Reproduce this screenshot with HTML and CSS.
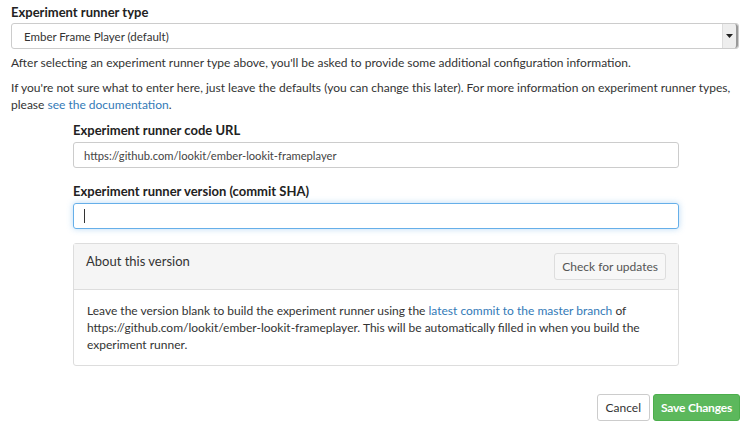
FILE: index.html
```
<!DOCTYPE html>
<html>
<head>
<meta charset="utf-8">
<link rel="stylesheet" href="styles.css">
</head>
<body>
<form class="form">
  <div class="group">
    <label class="label">Experiment runner type</label>
    <div class="select">
      <span class="select-value">Ember Frame Player (default)</span>
      <span class="select-arrow"><svg width="7" height="4" viewBox="0 0 7 4"><path d="M0 0H7L3.5 4Z" fill="#222"/></svg></span>
    </div>
  </div>
  <p class="help">After selecting an experiment runner type above, you'll be asked to provide some additional configuration information.</p>
  <p class="help help-2">If you're not sure what to enter here, just leave the defaults (you can change this later). For more information on experiment runner types, please <a href="#">see the documentation</a>.</p>

  <div class="indent">
    <div class="group">
      <label class="label">Experiment runner code URL</label>
      <div class="input">https://github.com/lookit/ember-lookit-frameplayer</div>
    </div>
    <div class="group">
      <label class="label">Experiment runner version (commit SHA)</label>
      <div class="input focus"><span class="caret"></span></div>
    </div>
    <div class="panel">
      <div class="panel-head">
        <span class="panel-title">About this version</span>
        <button type="button" class="btn btn-light">Check for updates</button>
      </div>
      <div class="panel-body">Leave the version blank to build the experiment runner using the <a href="#">latest commit to the master branch</a> of https://github.com/lookit/ember-lookit-frameplayer. This will be automatically filled in when you build the experiment runner.</div>
    </div>
  </div>

  <div class="actions">
    <button type="button" class="btn btn-default">Cancel</button>
    <button type="button" class="btn btn-success">Save Changes</button>
  </div>
</form>
</body>
</html>
```
FILE: styles.css
```
* { box-sizing: border-box; }
html, body { margin: 0; padding: 0; background: #fff; }
body {
  font-family: Lato, "Open Sans", sans-serif;
  font-size: 12px;
  color: #333;
  line-height: 17px;
}
a { color: #337ab7; text-decoration: none; }
.form { padding: 3px 8px 0 11px; }
.group { margin: 0; }
.label {
  display: block;
  font-weight: bold;
  font-size: 13px;
  color: #222;
  line-height: 18px;
  margin-bottom: 2px;
}
.select {
  display: flex;
  height: 26px;
  margin-right: 1px;
  border: 1px solid #ccc;
  border-radius: 3px;
  align-items: stretch;
  font-size: 11.5px;
  color: #333;
}
.select-value { flex: 1; padding-left: 12px; display: flex; align-items: center; }
.select-arrow {
  width: 16px;
  background: #eee;
  border-left: 1px solid #ddd;
  border-right: 2px solid #999;
  display: flex; align-items: center; justify-content: center;
  border-radius: 0 3px 3px 0;
}
.help { margin: 5px 0 0; line-height: 17px; }
.help-2 { margin-top: 8px; }

.indent { margin: 8px 61px 0 62px; }
.indent .group { margin-bottom: 14px; }
.indent .label { margin-bottom: 3px; }
.input {
  height: 26px;
  border: 1px solid #ccc;
  border-radius: 3px;
  padding: 0 10px;
  display: flex; align-items: center;
  font-size: 11.2px;
  color: #444;
}
.input.focus {
  border-color: #66afe9;
  box-shadow: 0 0 6px rgba(102,175,233,.45);
}
.caret { width: 1px; height: 14px; background: #333; }

.panel {
  margin-top: 13px;
  border: 1px solid #ddd;
  border-radius: 3px;
}
.panel-head {
  height: 46px;
  background: #f5f5f5;
  border-bottom: 1px solid #ddd;
  display: flex; justify-content: space-between; align-items: flex-start;
  padding: 9px 12px 0 12px;
}
.panel-title { font-size: 13px; color: #333; line-height: 17px; }
.btn {
  font-family: inherit;
  font-size: 12px;
  border-radius: 3px;
  height: 27px;
  padding: 0 11px;
  border: 1px solid #ccc;
  background: #fff;
  color: #333;
  cursor: pointer;
}
.btn-light { background: #f7f7f7; border-color: #ddd; color: #555; padding: 0 7px; }
.panel-body { padding: 12px 12px 12px 13px; line-height: 17px; }
.actions {
  display: flex; justify-content: flex-end; gap: 3px;
  margin-top: 28px;
}
.btn-default { padding: 0 8px; }
.btn-success { background: #5cb85c; border-color: #4cae4c; color: #fff; font-weight: bold; padding: 0 7px; letter-spacing: -0.2px; }
```
